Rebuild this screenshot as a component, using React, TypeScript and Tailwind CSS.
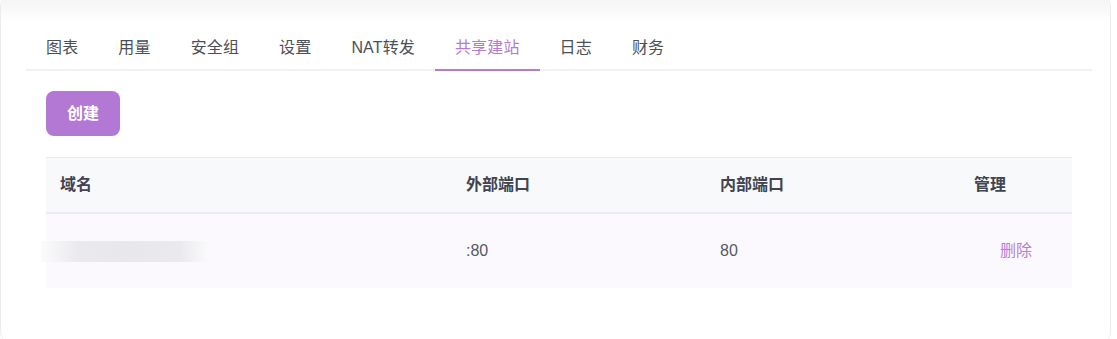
import { useState } from "react";

const tabs = ["图表", "用量", "安全组", "设置", "NAT转发", "共享建站", "日志", "财务"];

const sites = [{ id: 1, domain: "example.domain.com", external: ":80", internal: "80" }];

export default function App() {
    const [active, setActive] = useState("共享建站");

    return (
        <div
            className="w-[1117px] h-[339px] bg-white overflow-hidden"
            style={{ fontFamily: '"Liberation Sans", "Noto Sans CJK SC", sans-serif' }}
        >
            {/* card */}
            <div className="relative mt-[-6px] w-[1111px] h-[350px] bg-white rounded-xl border border-[#ececec] pl-[25px] pr-[18px] pt-[32px]">
                <div className="absolute left-0 right-0 top-0 h-[28px] rounded-t-xl bg-gradient-to-b from-[#f3f3f3] to-white pointer-events-none" />

                {/* tabs */}
                <div className="relative flex border-b-2 border-[#f2f2f2]">
                    {tabs.map((tab) => (
                        <button
                            key={tab}
                            onClick={() => setActive(tab)}
                            className={`relative px-5 h-[42px] text-[16px] leading-[42px] tracking-[0.15px] ${
                                active === tab ? "text-[#b57bd4]" : "text-[#4b4f57]"
                            }`}
                        >
                            {tab}
                            {active === tab && (
                                <span className="absolute left-0 right-0 bottom-[-2px] h-[2px] bg-[#b57bd4]" />
                            )}
                        </button>
                    ))}
                </div>

                {/* content */}
                <div className="p-5">
                    <button className="w-[74px] h-[45px] rounded-lg bg-[#b378d3] text-white text-[16px] font-bold">
                        创建
                    </button>

                    <div className="mt-[21px] border-t border-[#ececf0]">
                        <div className="grid grid-cols-[406px_254px_254px_112px] h-[56px] items-center bg-[#f7f9fa] border-b-2 border-[#efe8f6] text-[16px] font-bold text-[#3f4450]">
                            <div className="px-[14px]">域名</div>
                            <div className="px-[14px]">外部端口</div>
                            <div className="px-[14px]">内部端口</div>
                            <div className="px-[14px]">管理</div>
                        </div>
                        {sites.map((site) => (
                            <div
                                key={site.id}
                                className="grid grid-cols-[406px_254px_254px_112px] h-[74px] items-center bg-[#fbf9fe] text-[16px] text-[#555a63]"
                            >
                                <div className="px-[14px]">
                                    {/* redacted domain */}
                                    <div className="ml-[-19px] w-[169px] h-[21px] bg-[#fbfafc] flex items-center overflow-hidden">
                                        <div className="w-full h-[21px] bg-[linear-gradient(to_right,#fbfafc_0%,#eaeaee_22%,#e8e7ec_50%,#eaeaee_82%,#fbfafc_100%)]" />
                                    </div>
                                </div>
                                <div className="px-[14px]">{site.external}</div>
                                <div className="px-[14px]">{site.internal}</div>
                                <div className="px-[14px] text-center">
                                    <button className="text-[#b67fd8] text-[16px]">删除</button>
                                </div>
                            </div>
                        ))}
                    </div>
                </div>
            </div>
        </div>
    );
}
